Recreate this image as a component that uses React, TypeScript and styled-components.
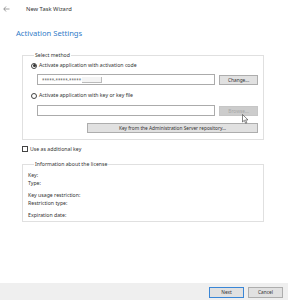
import React from "react";
import styled, { createGlobalStyle } from "styled-components";

const GlobalStyle = createGlobalStyle`
  html, body { margin: 0; padding: 0; background: #ffffff; }
  body { font-family: "Noto Sans", "DejaVu Sans", sans-serif; color: #333333; }
  * { box-sizing: border-box; }
`;

const Page = styled.div`
  position: relative;
  width: 288px;
  height: 300px;
  display: flex;
  flex-direction: column;
  overflow: hidden;
  font-size: 5.2px;
`;

const Header = styled.div`
  height: 18px;
  display: flex;
  align-items: center;
`;

const BackArrow = styled.span`
  width: 26px;
  padding-left: 3px;
  display: flex;
  align-items: center;
  color: #777;
`;

const WindowTitle = styled.span`
  font-size: 5.8px;
  color: #333;
`;

const Heading = styled.div`
  margin: 10px 0 0 16px;
  height: 10px;
  line-height: 10px;
  font-size: 7.6px;
  color: #2f7bc8;
`;

const Body = styled.div`
  flex: 1;
  padding: 0 24px 0 22px;
  display: flex;
  flex-direction: column;
`;

const Group = styled.fieldset<{ $mt: number; $pb: number }>`
  margin: ${(p) => p.$mt}px 0 0 0;
  padding: 0 5px ${(p) => p.$pb}px 8px;
  min-width: 0;
  border: 1px solid #e0e0e0;
  display: flex;
  flex-direction: column;
`;

const Legend = styled.legend`
  margin-left: 3px;
  padding: 0 1px;
  font-size: 5.2px;
  line-height: 6px;
  color: #333;
`;

const OptionRow = styled.label<{ $mt: number }>`
  margin-top: ${(p) => p.$mt}px;
  height: 7px;
  display: flex;
  align-items: center;
  gap: 2px;
  line-height: 7px;
`;

const Radio = styled.span<{ $checked?: boolean }>`
  width: 6px;
  height: 6px;
  border: 0.7px solid #444;
  border-radius: 50%;
  display: flex;
  align-items: center;
  justify-content: center;
  background: #fff;
  &::after {
    content: "";
    width: 3px;
    height: 3px;
    border-radius: 50%;
    background: ${(p) => (p.$checked ? "#333" : "transparent")};
  }
`;

const InputRow = styled.div<{ $mt: number }>`
  margin-top: ${(p) => p.$mt}px;
  padding-left: 6px;
  display: flex;
  align-items: center;
  gap: 4px;
`;

const TextBox = styled.div`
  width: 179px;
  height: 11px;
  border: 1px solid #ababab;
  background: #fff;
  display: flex;
  align-items: center;
  padding-left: 4px;
  font-size: 4.4px;
  color: #555;
`;

const Masked = styled.span`
  margin-left: 1px;
  width: 20px;
  height: 6px;
  border-bottom: 1px solid #bbb;
  border-right: 1px solid #bbb;
  background: #f4f4f4;
`;

const Button = styled.button<{ $w: number; $disabled?: boolean; $default?: boolean }>`
  width: ${(p) => p.$w}px;
  height: 10px;
  padding: 0;
  font-family: inherit;
  font-size: 4.8px;
  line-height: 8px;
  color: ${(p) => (p.$disabled ? "#a6a6a6" : "#333")};
  background: ${(p) => (p.$disabled ? "#cccccc" : "#e1e1e1")};
  border: 1px solid ${(p) => (p.$default ? "#3a86d6" : p.$disabled ? "#c6c6c6" : "#adadad")};
  border-radius: 0;
`;

const WideButtonRow = styled.div`
  margin-top: 7px;
  display: flex;
  justify-content: flex-end;
`;

const CheckRow = styled.label`
  margin-top: 5px;
  height: 7px;
  display: flex;
  align-items: center;
  gap: 2px;
`;

const CheckBox = styled.span`
  width: 6px;
  height: 6px;
  border: 0.7px solid #444;
  background: #fff;
`;

const InfoLine = styled.div<{ $mt: number }>`
  margin-top: ${(p) => p.$mt}px;
  margin-left: -3px;
  height: 7px;
  line-height: 7px;
`;

const Footer = styled.div`
  height: 17px;
  background: #efefef;
  display: flex;
  align-items: center;
  justify-content: flex-end;
  gap: 4px;
  padding: 0 5px 0 0;
`;

const FooterButton = styled(Button)`
  height: 11px;
  margin-top: 1px;
`;

const Cursor = styled.svg`
  position: absolute;
  left: 242px;
  top: 114px;
`;

export default function App() {
  return (
    <>
      <GlobalStyle />
      <Page>
        <Header>
          <BackArrow>
            <svg width="7" height="6" viewBox="0 0 7 6">
              <path d="M3 0.5 L0.8 3 L3 5.5 M0.8 3 H6.5" stroke="#777" strokeWidth="0.7" fill="none" />
            </svg>
          </BackArrow>
          <WindowTitle>New Task Wizard</WindowTitle>
        </Header>
        <Heading>Activation Settings</Heading>
        <Body>
          <Group $mt={14} $pb={6}>
            <Legend>Select method</Legend>
            <OptionRow $mt={4}>
              <Radio $checked />
              Activate application with activation code
            </OptionRow>
            <InputRow $mt={5}>
              <TextBox>
                *****-*****-*****
                <Masked />
              </TextBox>
              <Button $w={39}>Change...</Button>
            </InputRow>
            <OptionRow $mt={7}>
              <Radio />
              Activate application with key or key file
            </OptionRow>
            <InputRow $mt={6}>
              <TextBox />
              <Button $w={39} $disabled>
                Browse...
              </Button>
            </InputRow>
            <WideButtonRow>
              <Button $w={171}>Key from the Administration Server repository...</Button>
            </WideButtonRow>
          </Group>
          <CheckRow>
            <CheckBox />
            Use as additional key
          </CheckRow>
          <Group $mt={9} $pb={2}>
            <Legend>Information about the license</Legend>
            <InfoLine $mt={5}>Key:</InfoLine>
            <InfoLine $mt={1}>Type:</InfoLine>
            <InfoLine $mt={5}>Key usage restriction:</InfoLine>
            <InfoLine $mt={1}>Restriction type:</InfoLine>
            <InfoLine $mt={5}>Expiration date:</InfoLine>
          </Group>
        </Body>
        <Footer>
          <FooterButton $w={35} $default>
            Next
          </FooterButton>
          <FooterButton $w={35}>Cancel</FooterButton>
        </Footer>
        <Cursor width="7" height="10" viewBox="0 0 7 10">
          <path d="M0.5 0.5 V8 L2.3 6.3 L3.6 9.2 L4.8 8.7 L3.6 5.9 L6 5.9 Z" fill="#fff" stroke="#333" strokeWidth="0.6" />
        </Cursor>
      </Page>
    </>
  );
}
